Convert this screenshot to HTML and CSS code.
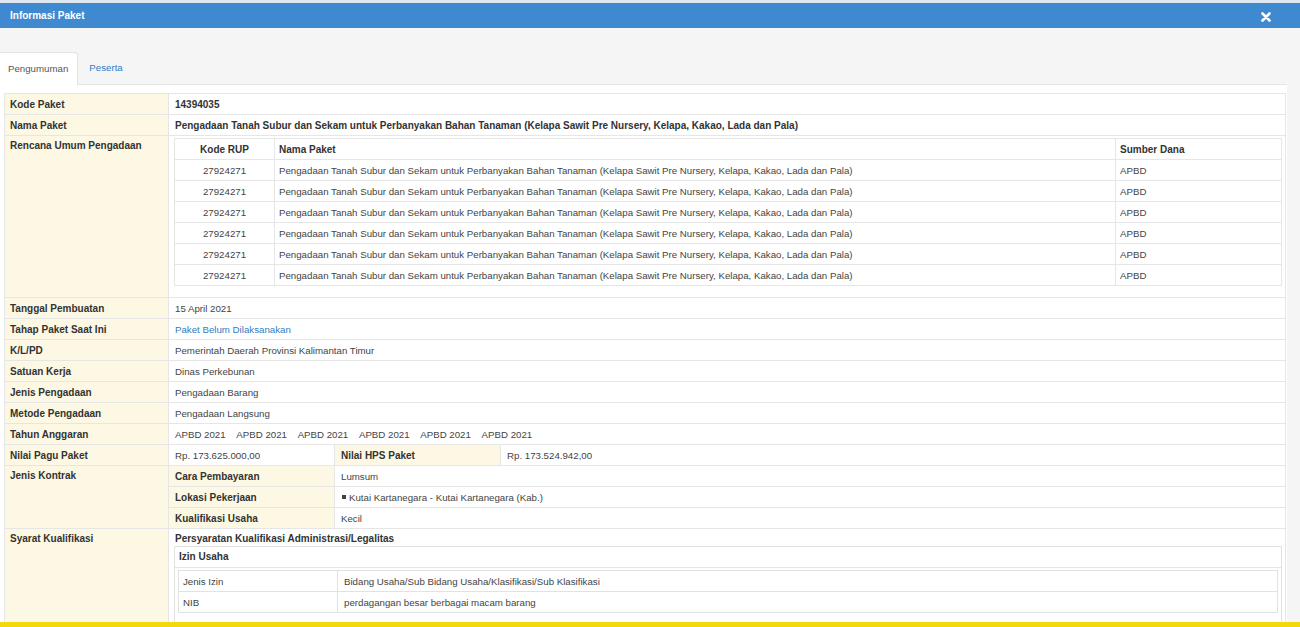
FILE: index.html
```html
<!DOCTYPE html>
<html lang="id">
<head>
<meta charset="utf-8">
<title>Informasi Paket</title>
<link rel="stylesheet" href="styles.css">
</head>
<body>
<div class="modal">
  <div class="modal-head">
    <span class="title">Informasi Paket</span>
    <span class="close" aria-label="Tutup">
      <svg width="10" height="10" viewBox="0 0 10 10"><path d="M1.5 1.5 L8.5 8.5 M8.5 1.5 L1.5 8.5" stroke="#fff" stroke-width="2.6" stroke-linecap="round"/></svg>
    </span>
  </div>
  <div class="modal-body">
    <ul class="tabs">
      <li class="tab active">Pengumuman</li>
      <li class="tab"><a class="tab-link">Peserta</a></li>
    </ul>
    <div class="pane">
      <table class="info">
        <colgroup>
          <col class="c1"><col class="c2"><col class="c3"><col class="c4">
        </colgroup>
        <tr><th>Kode Paket</th><td colspan="3" class="strong">14394035</td></tr>
        <tr><th>Nama Paket</th><td colspan="3" class="strong">Pengadaan Tanah Subur dan Sekam untuk Perbanyakan Bahan Tanaman (Kelapa Sawit Pre Nursery, Kelapa, Kakao, Lada dan Pala)</td></tr>
        <tr>
          <th class="top">Rencana Umum Pengadaan</th>
          <td colspan="3" class="rup-cell">
            <table class="rup">
              <colgroup><col class="r1"><col class="r2"><col class="r3"></colgroup>
              <tr><th class="center">Kode RUP</th><th>Nama Paket</th><th>Sumber Dana</th></tr>
              <tr><td class="center">27924271</td><td>Pengadaan Tanah Subur dan Sekam untuk Perbanyakan Bahan Tanaman (Kelapa Sawit Pre Nursery, Kelapa, Kakao, Lada dan Pala)</td><td>APBD</td></tr>
              <tr><td class="center">27924271</td><td>Pengadaan Tanah Subur dan Sekam untuk Perbanyakan Bahan Tanaman (Kelapa Sawit Pre Nursery, Kelapa, Kakao, Lada dan Pala)</td><td>APBD</td></tr>
              <tr><td class="center">27924271</td><td>Pengadaan Tanah Subur dan Sekam untuk Perbanyakan Bahan Tanaman (Kelapa Sawit Pre Nursery, Kelapa, Kakao, Lada dan Pala)</td><td>APBD</td></tr>
              <tr><td class="center">27924271</td><td>Pengadaan Tanah Subur dan Sekam untuk Perbanyakan Bahan Tanaman (Kelapa Sawit Pre Nursery, Kelapa, Kakao, Lada dan Pala)</td><td>APBD</td></tr>
              <tr><td class="center">27924271</td><td>Pengadaan Tanah Subur dan Sekam untuk Perbanyakan Bahan Tanaman (Kelapa Sawit Pre Nursery, Kelapa, Kakao, Lada dan Pala)</td><td>APBD</td></tr>
              <tr><td class="center">27924271</td><td>Pengadaan Tanah Subur dan Sekam untuk Perbanyakan Bahan Tanaman (Kelapa Sawit Pre Nursery, Kelapa, Kakao, Lada dan Pala)</td><td>APBD</td></tr>
            </table>
          </td>
        </tr>
        <tr><th>Tanggal Pembuatan</th><td colspan="3">15 April 2021</td></tr>
        <tr><th>Tahap Paket Saat Ini</th><td colspan="3"><a class="link">Paket Belum Dilaksanakan</a></td></tr>
        <tr><th>K/L/PD</th><td colspan="3">Pemerintah Daerah Provinsi Kalimantan Timur</td></tr>
        <tr><th>Satuan Kerja</th><td colspan="3">Dinas Perkebunan</td></tr>
        <tr><th>Jenis Pengadaan</th><td colspan="3">Pengadaan Barang</td></tr>
        <tr><th>Metode Pengadaan</th><td colspan="3">Pengadaan Langsung</td></tr>
        <tr><th>Tahun Anggaran</th><td colspan="3"><span class="year">APBD 2021</span><span class="year">APBD 2021</span><span class="year">APBD 2021</span><span class="year">APBD 2021</span><span class="year">APBD 2021</span><span class="year">APBD 2021</span></td></tr>
        <tr><th>Nilai Pagu Paket</th><td>Rp. 173.625.000,00</td><th class="sub">Nilai HPS Paket</th><td>Rp. 173.524.942,00</td></tr>
        <tr><th rowspan="3" class="top">Jenis Kontrak</th><th class="sub">Cara Pembayaran</th><td colspan="2">Lumsum</td></tr>
        <tr><th class="sub">Lokasi Pekerjaan</th><td colspan="2"><span class="bullet"></span>Kutai Kartanegara - Kutai Kartanegara (Kab.)</td></tr>
        <tr><th class="sub">Kualifikasi Usaha</th><td colspan="2">Kecil</td></tr>
        <tr>
          <th class="top">Syarat Kualifikasi</th>
          <td colspan="3" class="syarat">
            <div class="syarat-title">Persyaratan Kualifikasi Administrasi/Legalitas</div>
            <div class="panel">
              <div class="panel-head">Izin Usaha</div>
              <div class="panel-body">
                <table class="izin">
                  <colgroup><col class="i1"><col class="i2"></colgroup>
                  <tr><td>Jenis Izin</td><td>Bidang Usaha/Sub Bidang Usaha/Klasifikasi/Sub Klasifikasi</td></tr>
                  <tr><td>NIB</td><td>perdagangan besar berbagai macam barang</td></tr>
                </table>
              </div>
            </div>
          </td>
        </tr>
      </table>
    </div>
  </div>
  <div class="footer-line"></div>
</div>
</body>
</html>
```

FILE: styles.css
```css
* { box-sizing: border-box; }
html, body {
  margin: 0;
  padding: 0;
  width: 1300px;
  height: 627px;
  overflow: hidden;
  background: #f5f5f5;
  font-family: "Liberation Sans", Arial, sans-serif;
  font-size: 9.7px;
  color: #444;
}
.modal {
  display: flex;
  flex-direction: column;
  height: 627px;
}
.modal-head {
  flex: 0 0 28px;
  border-top: 3px solid #dfe8f1;
  background: #3e89d0;
  display: flex;
  align-items: center;
  justify-content: space-between;
  padding: 0 29px 0 10px;
}
.title {
  color: #fff;
  font-weight: bold;
  font-size: 10px;
}
.close {
  display: flex;
  width: 10px;
  height: 10px;
  margin-top: 2px;
}
.modal-body {
  flex: 1 1 auto;
  min-height: 0;
  overflow: hidden;
  padding-top: 24px;
  background: #f5f5f5;
}
.tabs {
  list-style: none;
  margin: 0;
  padding: 0;
  display: flex;
  height: 32px;
}
.tab {
  padding: 0 8px;
  margin-right: 3px;
  line-height: 32px;
  height: 33px;
}
.tab.active {
  background: #fff;
  border: 1px solid #e2e2e2;
  border-left: none;
  border-bottom: none;
  border-radius: 0 3px 0 0;
  color: #555;
  padding-right: 9px;
}
.tab-link { color: #2f7dc4; }
.pane {
  width: 1287px;
  background: #fff;
  border-top: 1px solid #e6e6e6;
  padding: 8px 0 0 4px;
  height: 600px;
}
table {
  border-collapse: collapse;
  table-layout: fixed;
}
.info { width: 1282px; }
.c1 { width: 164px; }
.c2 { width: 166px; }
.c3 { width: 166px; }
.info > tbody > tr > th,
.info > tbody > tr > td {
  border: 1px solid #e6e6e6;
  height: 21px;
  padding: 0 6px;
  line-height: 19px;
  text-align: left;
  vertical-align: middle;
  white-space: nowrap;
}
.info > tbody > tr > th {
  background: #fcf8e3;
  font-weight: bold;
  font-size: 10px;
  color: #333;
  padding-left: 5px;
}
.info > tbody > tr > th.sub { padding-left: 6px; }
.info > tbody > tr > th.top { vertical-align: top; }
.strong { font-weight: bold; font-size: 10px; color: #333; }
.link { color: #2f7dc4; }
.year { margin-right: 10.7px; }
.bullet {
  display: inline-block;
  width: 4px;
  height: 4px;
  background: #444;
  margin: 0 3px 1px 1px;
  vertical-align: middle;
}
.info > tbody > tr > td.rup-cell {
  padding: 2px 3px 11px 5px;
  vertical-align: top;
}
.rup { width: 1108px; }
.r1 { width: 100px; }
.r3 { width: 166px; }
.rup th, .rup td {
  border: 1px solid #e6e6e6;
  height: 21px;
  padding: 0 4px;
  line-height: 19px;
  text-align: left;
  white-space: nowrap;
  background: #fff;
}
.rup th { font-weight: bold; font-size: 10px; color: #333; }
.rup .center { text-align: center; }
.info > tbody > tr > td.syarat {
  vertical-align: top;
  padding: 3px 3px 0 5px;
  height: 100px;
}
.syarat-title {
  font-weight: bold;
  font-size: 10px;
  color: #333;
  line-height: 14px;
  padding-left: 1px;
}
.panel {
  border: 1px solid #e2e2e2;
  height: 90px;
}
.panel-head {
  font-weight: bold;
  font-size: 10px;
  color: #333;
  height: 21px;
  line-height: 20px;
  padding-left: 4px;
  border-bottom: 1px solid #e6e6e6;
}
.panel-body { padding: 2px 3px 0 3px; }
.izin { width: 1100px; }
.i1 { width: 159px; }
.izin td {
  border: 1px solid #e2e2e2;
  height: 21px;
  padding: 0 4px;
  line-height: 19px;
}
.izin td + td { padding-left: 6px; }
.footer-line {
  flex: 0 0 5px;
  background: #f3d90c;
}
```
